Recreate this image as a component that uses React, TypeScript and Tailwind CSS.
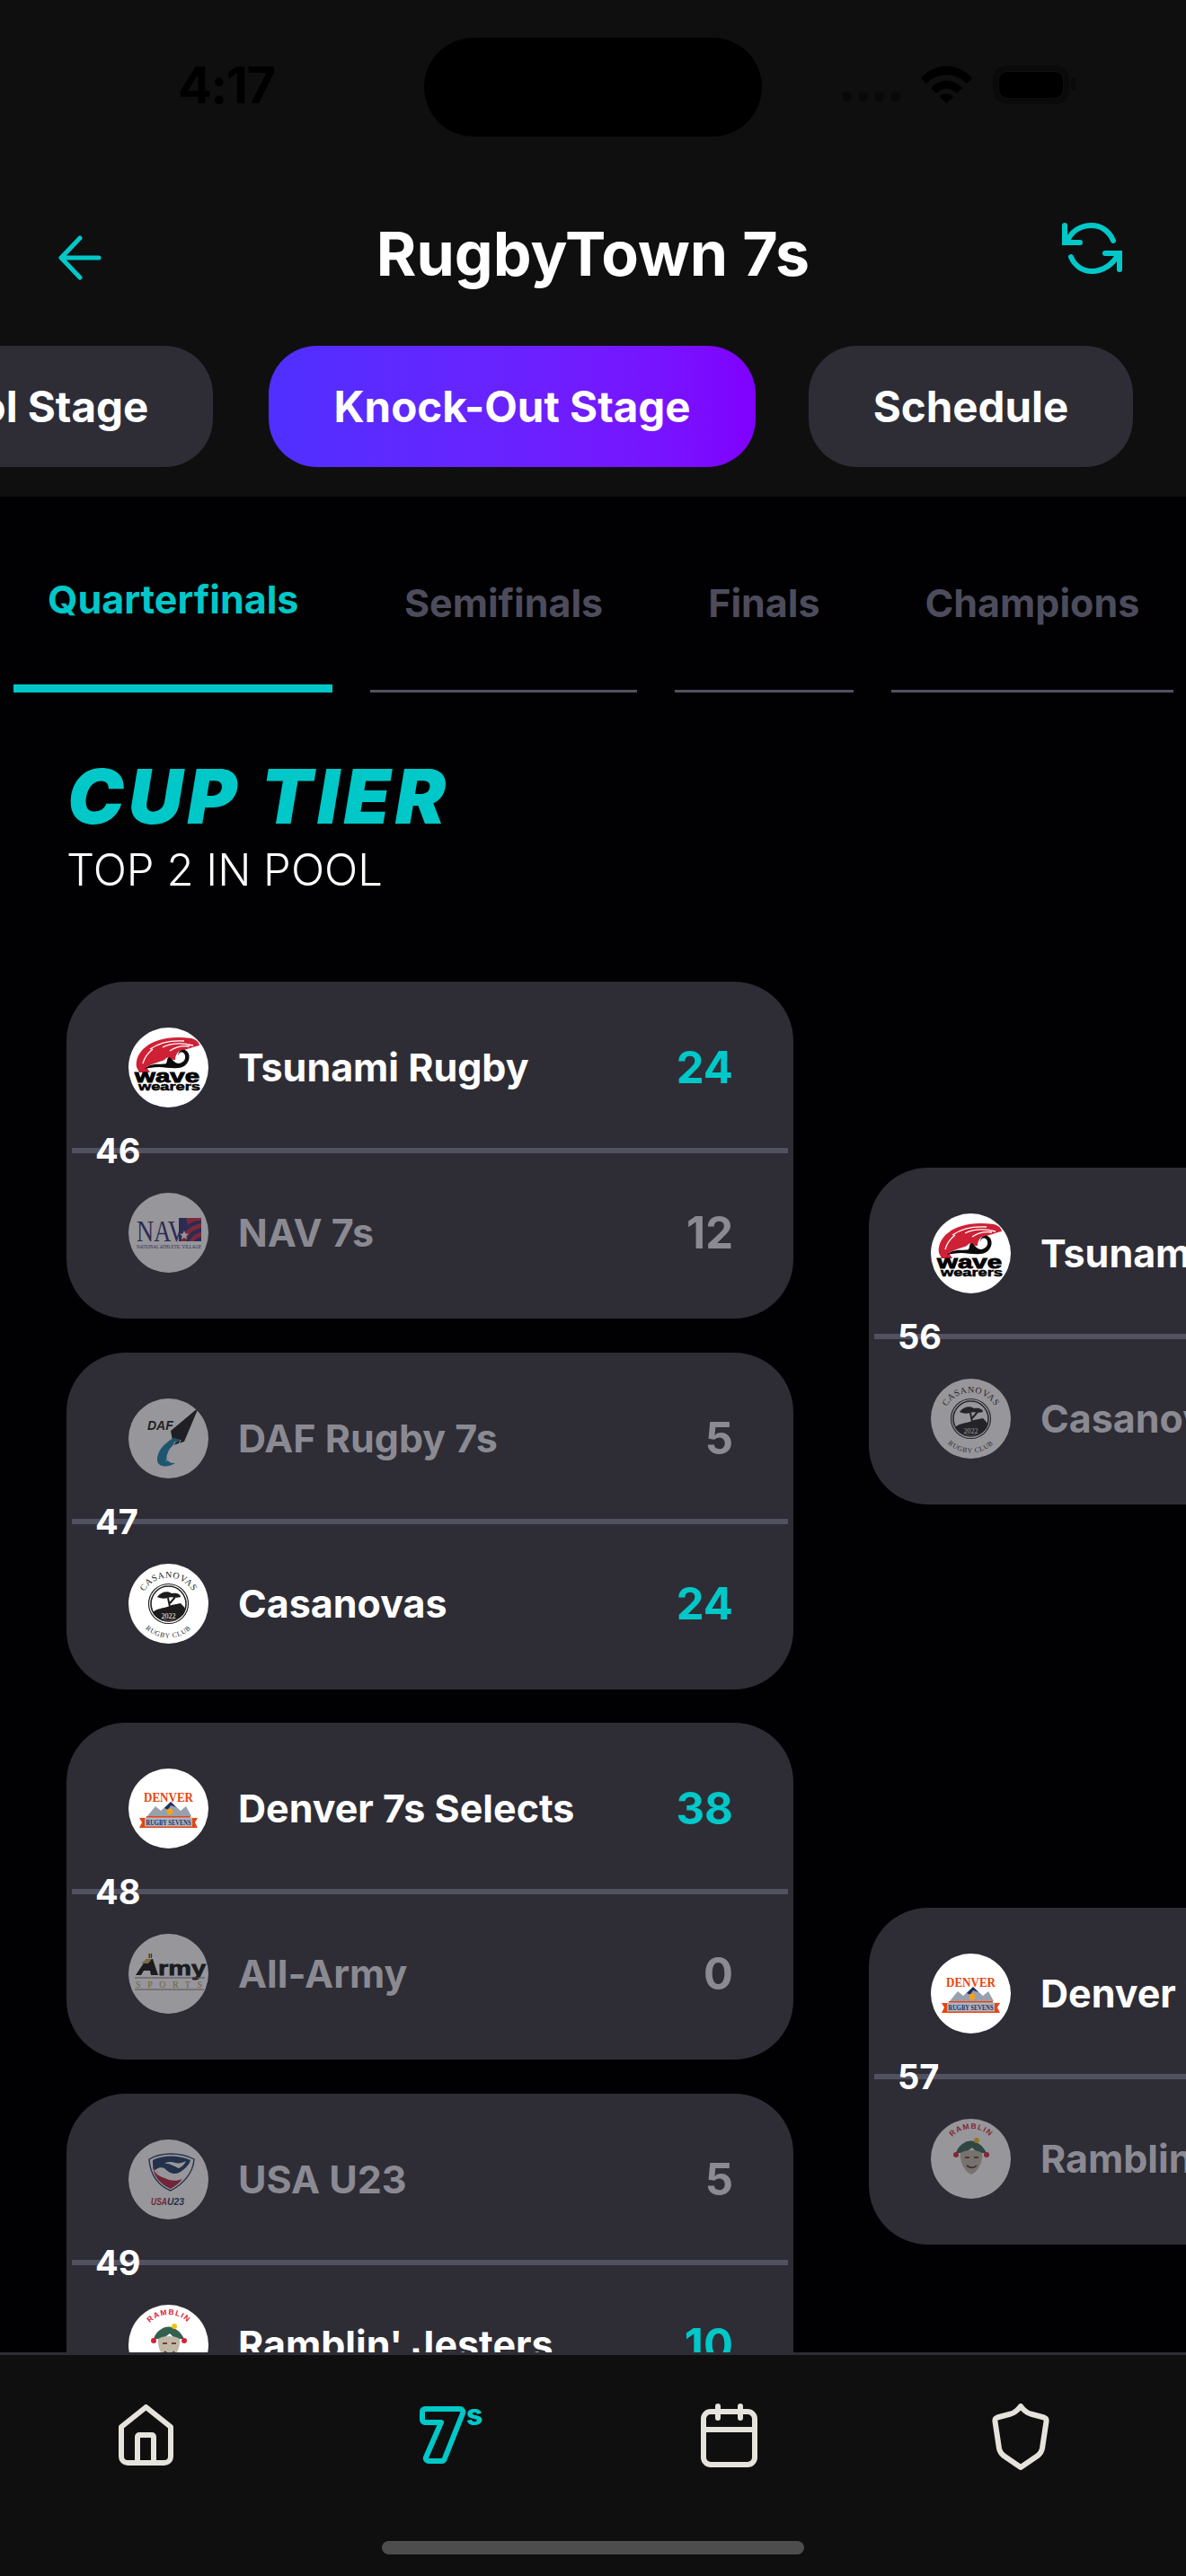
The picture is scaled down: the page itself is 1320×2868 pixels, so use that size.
import { ReactNode } from "react";

const TEAL = "#00c8c8";

const serif = "'Liberation Serif', serif";
const sans = "'Liberation Sans', sans-serif";

function LogoBox({ children }: { children: ReactNode }) {
  return (
    <svg viewBox="0 0 89 89" className="h-full w-full">
      {children}
    </svg>
  );
}

function WaveLogo() {
  return (
    <LogoBox>
      <path d="M9 44C6 26 28 6 70 12C74 13 78 15 79 20C70 22 66 24 62 25C56 24 52 30 52 36C46 36 44 32 42 34C40 38 30 38 20 44L24 50L12 50Z" fill="#cf2136" />
      <path d="M24 24C34 17 48 14 62 15M38 22C48 17 60 17 72 20M16 40C18 32 22 28 27 24M46 26C52 22 60 20 68 21" stroke="#fff" strokeWidth="1.3" fill="none" />
      <path d="M18 46C26 38 36 42 42 40C44 36 42 34 46 33C50 37 52 40 56 40C62 39 65 34 62 29C59 26 55 28 56 32C54 28 58 24 63 25C70 28 69 40 60 44C50 47 42 44 34 44C28 44 22 45 18 46Z" fill="#0b0b0b" />
      <text x="7" y="61" fontFamily={sans} fontWeight="900" fontSize="21" textLength="72" lengthAdjust="spacingAndGlyphs" stroke="#000" strokeWidth="0.9" fill="#000">wave</text>
      <text x="11" y="70" fontFamily={sans} fontWeight="900" fontSize="13" textLength="69" lengthAdjust="spacingAndGlyphs" stroke="#000" strokeWidth="0.5" fill="#000">wearers</text>
    </LogoBox>
  );
}

function NavLogo() {
  return (
    <LogoBox>
      <path d="M56 28H81V54H56Z" fill="#2b2a72" />
      <path d="M58 54C62 42 70 36 81 34V39C72 41 66 46 64 54ZM68 54C70 49 75 45 81 44V49C77 50 74 51 73 54ZM64 28H81V31C74 31 70 33 66 36Z" fill="#c8263a" />
      <path d="M62 42l1.5 3.5 3.5.3-2.7 2.3.9 3.6-3.2-2-3.2 2 .9-3.6-2.7-2.3 3.5-.3z" fill="#fff" />
      <text x="9" y="54" fontFamily={serif} fontSize="34" textLength="54" lengthAdjust="spacingAndGlyphs" fill="#2b2a72">NAV</text>
      <text x="9" y="62" fontFamily={serif} fontSize="5.4" textLength="72" lengthAdjust="spacingAndGlyphs" fill="#2b2a72">NATIONAL ATHLETIC VILLAGE</text>
    </LogoBox>
  );
}

function CasanovasLogo() {
  return (
    <LogoBox>
      <defs>
        <path id="casa-top" d="M13 47A31.5 31.5 0 0 1 76 47" />
        <path id="casa-bot" d="M8 46A36.5 36.5 0 0 0 81 46" />
      </defs>
      <text fontFamily={serif} fontSize="10" fill="#222" letterSpacing="0.6">
        <textPath href="#casa-top" startOffset="50%" textAnchor="middle">CASANOVAS</textPath>
      </text>
      <text fontFamily={serif} fontSize="7.6" fill="#222" letterSpacing="0.8">
        <textPath href="#casa-bot" startOffset="50%" textAnchor="middle">RUGBY CLUB</textPath>
      </text>
      <circle cx="44.5" cy="44.5" r="22" fill="none" stroke="#222" strokeWidth="1.2" />
      <circle cx="44.5" cy="44.5" r="19.5" fill="#fff" stroke="#222" strokeWidth="1.6" />
      <path d="M27 54C34 48 42 50 48 46L58 44C62 48 64 50 63 53C58 66 32 66 27 54Z" fill="#1c1c1c" />
      <path d="M46 48L44 38M46 44L52 37" stroke="#1c1c1c" strokeWidth="2" />
      <path d="M32 37C36 31 44 30 48 33C54 32 58 34 58 37C52 39 48 36 44 38C40 39 36 39 32 37Z" fill="#1c1c1c" />
      <text x="44.5" y="61" textAnchor="middle" fontFamily={serif} fontSize="8" fill="#fff">2022</text>
    </LogoBox>
  );
}

function DafLogo() {
  return (
    <LogoBox>
      <path d="M47 36L78 10L62 48L50 52Z" fill="#141414" />
      <path d="M50 44C40 50 32 58 32 68C32 76 42 78 52 72C44 72 40 68 44 60C46 54 52 50 58 46Z" fill="#0f7fa8" />
      <path d="M52 48L42 70M58 46L48 72" stroke="#fff" strokeWidth="1" />
      <text x="21" y="35" fontFamily={sans} fontWeight="700" fontStyle="italic" fontSize="14" fill="#141414">DAF</text>
    </LogoBox>
  );
}

function DenverLogo() {
  return (
    <LogoBox>
      <text x="17" y="37" fontFamily={serif} fontWeight="700" fontSize="15" textLength="55" lengthAdjust="spacingAndGlyphs" fill="#e8450f">DENVER</text>
      <path d="M21 53L30 42L36 47L47 37L58 47L64 42L70 53Z" fill="#99a0ad" />
      <path d="M40 44L47 37L53 43L47 41L44 46Z" fill="#1d2f5c" />
      <circle cx="46" cy="48" r="3.4" fill="#f7a11a" />
      <path d="M12 55H20V53H69V55H77L74 60L77 66H12L15 60Z" fill="#e8450f" />
      <rect x="18" y="54.5" width="53" height="10" fill="#aeb6c6" />
      <text x="44.5" y="63" textAnchor="middle" fontFamily={serif} fontWeight="700" fontSize="9" textLength="50" lengthAdjust="spacingAndGlyphs" fill="#1d2f5c">RUGBY SEVENS</text>
    </LogoBox>
  );
}

function ArmyLogo() {
  return (
    <LogoBox>
      <path d="M8 46L20 28H27L33 46H25L24 41H17L14 46Z" fill="#0c0c0c" />
      <path d="M22 33H14L20 28H26Z" fill="#c9a94f" />
      <text x="22" y="27" fontFamily={sans} fontWeight="700" fontSize="8" fill="#0c0c0c">ll</text>
      <text x="33" y="46" fontFamily={sans} fontWeight="900" fontSize="22" textLength="53" lengthAdjust="spacingAndGlyphs" stroke="#0c0c0c" strokeWidth="0.8" fill="#0c0c0c">rmy</text>
      <path d="M7 49H85M7 62H84" stroke="#777" strokeWidth="1.2" />
      <text x="8" y="60" fontFamily={serif} fontSize="10" textLength="74" fill="#b5964a">SPORTS</text>
    </LogoBox>
  );
}

function UsaLogo() {
  return (
    <LogoBox>
      <path d="M23 22C36 14 58 14 73 22C72 38 60 50 47 57C34 52 24 40 23 22Z" fill="#fff" stroke="#1c3560" strokeWidth="1.4" />
      <path d="M27 23C38 17 56 17 69 23C68 28 62 34 56 37C50 40 44 36 40 32C36 30 30 32 29 36C27 32 27 28 27 23Z" fill="#1c3560" />
      <path d="M52 26C46 24 42 25 40 27C46 26 50 30 56 32C60 30 62 28 64 24C60 26 56 27 52 26Z" fill="#fff" />
      <path d="M27 30C28 42 36 50 47 55C52 52 57 48 60 44C50 48 38 46 27 30Z" fill="#b2203a" />
      <path d="M29 34C34 42 46 46 58 40" stroke="#fff" strokeWidth="1.6" fill="none" />
      <text x="25" y="73" fontFamily={sans} fontWeight="700" fontStyle="italic" fontSize="11" textLength="18" lengthAdjust="spacingAndGlyphs" fill="#b2203a">USA</text>
      <text x="43" y="73" fontFamily={sans} fontWeight="700" fontStyle="italic" fontSize="11" textLength="19" lengthAdjust="spacingAndGlyphs" fill="#1c3560">U23</text>
    </LogoBox>
  );
}

function JesterLogo() {
  return (
    <LogoBox>
      <defs>
        <path id="jester-top" d="M16 40A29 29 0 0 1 74 40" />
      </defs>
      <text fontFamily={sans} fontWeight="700" fontSize="8.5" fill="#d8203a" letterSpacing="1.2">
        <textPath href="#jester-top" startOffset="50%" textAnchor="middle">RAMBLIN</textPath>
      </text>
      <path d="M28 38C32 26 44 22 50 26C56 28 60 34 62 38L52 38L46 32L38 38Z" fill="#33604f" />
      <circle cx="28" cy="40" r="3" fill="#d8203a" />
      <circle cx="51" cy="24" r="3" fill="#f2c21a" />
      <circle cx="62" cy="40" r="3" fill="#d8203a" />
      <path d="M33 38C38 34 52 34 57 38C58 46 54 58 45 62C36 58 32 46 33 38Z" fill="#bdb9a6" />
      <path d="M38 43h5M48 43h5" stroke="#7b3a30" strokeWidth="2" />
      <path d="M40 52C44 55 48 55 51 52" stroke="#5b2a22" strokeWidth="1.6" fill="none" />
    </LogoBox>
  );
}

type Team = { name: string; score?: number; logo: ReactNode; win: boolean };
type Match = { id: number; teams: [Team, Team] };

const tsunami = { name: "Tsunami Rugby", logo: <WaveLogo /> };
const casanovas = { name: "Casanovas", logo: <CasanovasLogo /> };
const denver = { name: "Denver 7s Selects", logo: <DenverLogo /> };
const jesters = { name: "Ramblin' Jesters", logo: <JesterLogo /> };

const quarterfinals: Match[] = [
  { id: 46, teams: [{ ...tsunami, score: 24, win: true }, { name: "NAV 7s", score: 12, logo: <NavLogo />, win: false }] },
  { id: 47, teams: [{ name: "DAF Rugby 7s", score: 5, logo: <DafLogo />, win: false }, { ...casanovas, score: 24, win: true }] },
  { id: 48, teams: [{ ...denver, score: 38, win: true }, { name: "All-Army", score: 0, logo: <ArmyLogo />, win: false }] },
  { id: 49, teams: [{ name: "USA U23", score: 5, logo: <UsaLogo />, win: false }, { ...jesters, score: 10, win: true }] },
];

const semifinals: Match[] = [
  { id: 56, teams: [{ ...tsunami, win: true }, { ...casanovas, win: false }] },
  { id: 57, teams: [{ ...denver, win: true }, { ...jesters, win: false }] },
];

const tabs = [
  { label: "Quarterfinals", active: true },
  { label: "Semifinals", active: false },
  { label: "Finals", active: false },
  { label: "Champions", active: false },
];

function TeamRow({ team }: { team: Team }) {
  return (
    <div className="flex h-[89px] items-center pl-[69px] pr-[67px]">
      <div className={`h-[89px] w-[89px] shrink-0 overflow-hidden rounded-full bg-white ${team.win ? "" : "opacity-50"}`}>
        {team.logo}
      </div>
      <span className={`ml-[33px] flex-1 whitespace-nowrap text-[43px] font-bold leading-none ${team.win ? "text-white" : "text-[#8b8a92]"}`}>
        {team.name}
      </span>
      {team.score !== undefined && (
        <span className={`text-[49px] font-bold leading-none ${team.win ? "text-[#00c8c8]" : "text-[#8b8a92]"}`}>
          {team.score}
        </span>
      )}
    </div>
  );
}

function MatchCard({ match }: { match: Match }) {
  return (
    <div className="w-[809px] shrink-0 rounded-[66px] bg-[#2e2d36] pb-[51px] pt-[51px]">
      <TeamRow team={match.teams[0]} />
      <div className="relative mx-[6px] mb-[44px] mt-[45px] h-[6px] bg-[#525160]">
        <span className="absolute left-[26px] top-1/2 -translate-y-1/2 text-[38px] font-bold leading-none text-white">{match.id}</span>
      </div>
      <TeamRow team={match.teams[1]} />
    </div>
  );
}

export default function App() {
  return (
    <div className="flex h-[2868px] w-[1320px] flex-col overflow-hidden bg-[#010103] font-[Inter]">
      {/* Header */}
      <header className="h-[553px] shrink-0 overflow-hidden bg-[#0f0f0f]">
        <div className="flex h-[152px] pl-[198px] pt-[42px]">
          <span className="mt-[23px] w-[274px] text-[56px] font-bold leading-[60px] tracking-tight text-black">4:17</span>
          <div className="h-[110px] w-[376px] rounded-full bg-black" />
          <div className="ml-[89px] mt-[60px] flex h-[14px] gap-[7px]">
            {[0, 1, 2, 3].map((i) => (
              <span key={i} className="h-[11px] w-[11px] rounded-full bg-[#090909]" />
            ))}
          </div>
          <svg viewBox="0 0 57 42" className="ml-[23px] mt-[31px] h-[42px] w-[57px]" fill="#000">
            <path d="M0 14C16 -4 41 -4 57 14L51 20C38 7 19 7 6 20Z" />
            <path d="M11 25C21 14 36 14 46 25L40 31C33 24 24 24 17 31Z" />
            <path d="M21 35C25 30 32 30 36 35L28.5 42Z" />
          </svg>
          <svg viewBox="0 0 93 43" className="ml-[23px] mt-[31px] h-[43px] w-[93px]">
            <rect x="3" y="3" width="79" height="37" rx="12" fill="none" stroke="#0a0a0a" strokeWidth="6" />
            <rect x="7" y="7" width="71" height="29" rx="9" fill="#000" />
            <rect x="87" y="14" width="5" height="14" rx="2.5" fill="#0a0a0a" />
          </svg>
        </div>

        <div className="mt-[96px] grid h-[68px] grid-cols-[1fr_auto_1fr]">
          <div className="pl-[65px] pt-[14px]">
            <svg viewBox="0 0 48 50" className="h-[50px] w-[48px]" fill="none" stroke={TEAL} strokeWidth="5" strokeLinecap="round" strokeLinejoin="round">
              <path d="M24 3L3 25L24 47M4 25H45" />
            </svg>
          </div>
          <h1 className="text-[68px] font-bold leading-[68px] text-white">RugbyTown 7s</h1>
          <div className="flex justify-end pr-[71px]">
            <svg viewBox="0 0 67 58" className="h-[58px] w-[67px]" fill="none" stroke={TEAL} strokeWidth="6" strokeLinecap="round" strokeLinejoin="miter">
              <path d="M3 3V22H20M6 20C11 9 21 3 33 3C44 3 53 10 57 20" />
              <path d="M64 52V34H48M10 38C14 48 23 54 33 54C45 54 56 47 62 36" />
            </svg>
          </div>
        </div>

        <div className="-ml-[154px] mt-[69px] flex h-[135px] gap-[59px] whitespace-nowrap text-[47.5px] font-bold text-white">
          <div className="flex items-center rounded-[54px] bg-[#2e2d36] px-[72px]">Pool Stage</div>
          <div className="ml-[3px] flex items-center rounded-[54px] bg-linear-to-r from-[#4f2fff] to-[#8000ff] px-[72px]">Knock-Out Stage</div>
          <div className="flex items-center rounded-[54px] bg-[#2e2d36] px-[72px]">Schedule</div>
        </div>
      </header>

      {/* Bracket */}
      <main className="min-h-0 flex-1 overflow-hidden">
        <div className="flex h-[218px] items-end gap-[42px] pl-[15px]">
          {tabs.map((tab) => (
            <div
              key={tab.label}
              className={
                tab.active
                  ? "border-b-[9px] border-[#00c8c8] px-[38px] pb-[70px] text-[43px] font-bold leading-[50px] text-[#00c8c8]"
                  : "border-b-[3px] border-[#525160] px-[37.5px] pb-[72px] text-[43px] font-bold leading-[50px] text-[#4d4c5c]"
              }
            >
              {tab.label}
            </div>
          ))}
        </div>

        <div className="pl-[75px]">
          <h2 className="mt-[74px] text-[84px] font-black italic leading-none tracking-[5px] text-[#00c8c8]">CUP TIER</h2>
          <p className="-ml-[1px] mt-[15px] text-[49px] font-light leading-none text-white">TOP 2 IN POOL</p>
        </div>

        <div className="ml-[74px] mt-[100px] flex gap-[84px]">
          <div className="flex flex-col gap-[37.67px]">
            {quarterfinals.map((m) => (
              <MatchCard key={m.id} match={m} />
            ))}
          </div>
          <div className="mt-[207px] flex flex-col gap-[449px]">
            {semifinals.map((m) => (
              <MatchCard key={m.id} match={m} />
            ))}
          </div>
        </div>
      </main>

      {/* Bottom nav */}
      <nav className="relative h-[249px] shrink-0 border-t-[3px] border-[#2e2d36] bg-[#0f0f0f]">
        <div className="flex items-start pl-[132px] pt-[54px]">
          <svg viewBox="0 0 61 68" className="mt-[1px] h-[68px] w-[61px]" fill="none" stroke="#e6e3dc" strokeWidth="6" strokeLinejoin="round">
            <path d="M3 25L30.5 3L58 25V58a7 7 0 0 1-7 7H10a7 7 0 0 1-7-7Z" />
            <path d="M21 65V36a2 2 0 0 1 2-2H37a2 2 0 0 1 2 2V65" />
          </svg>
          <svg viewBox="0 0 70 65" className="ml-[274px] mt-[3px] h-[65px] w-[70px]" fill="none" stroke="#00c8c8" strokeWidth="6" strokeLinejoin="round">
            <path d="M6 3H45a3.5 3.5 0 0 1 3 5L28 58a4 4 0 0 1-4 3H10a3 3 0 0 1-3-4L24 18H6a3 3 0 0 1-3-3V6a3 3 0 0 1 3-3Z" />
            <text x="52" y="21" fontFamily="Inter, sans-serif" fontWeight="800" fontSize="32" fill="#00c8c8" stroke="none">s</text>
          </svg>
          <svg viewBox="0 0 63 71" className="ml-[243px] h-[71px] w-[63px]" fill="none" stroke="#e6e3dc" strokeWidth="6" strokeLinecap="round">
            <rect x="3" y="9" width="57" height="59" rx="8" />
            <path d="M3 29H60M19 3V16M44 3V16" />
          </svg>
          <svg viewBox="0 0 64 74" className="ml-[261px] h-[74px] w-[64px]" fill="none" stroke="#e6e3dc" strokeWidth="6" strokeLinejoin="round">
            <path d="M32 3C35 7 38 10 43 11.5L58 15.5Q61 16.5 60.5 20L56 50Q55 55 51 58L32 71L13 58Q9 55 8 50L3.5 20Q3 16.5 6 15.5L21 11.5C26 10 29 7 32 3Z" />
          </svg>
        </div>
        <div className="absolute bottom-[24px] left-[425px] h-[15px] w-[470px] rounded-full bg-[#4d4d4d]" />
      </nav>
    </div>
  );
}
